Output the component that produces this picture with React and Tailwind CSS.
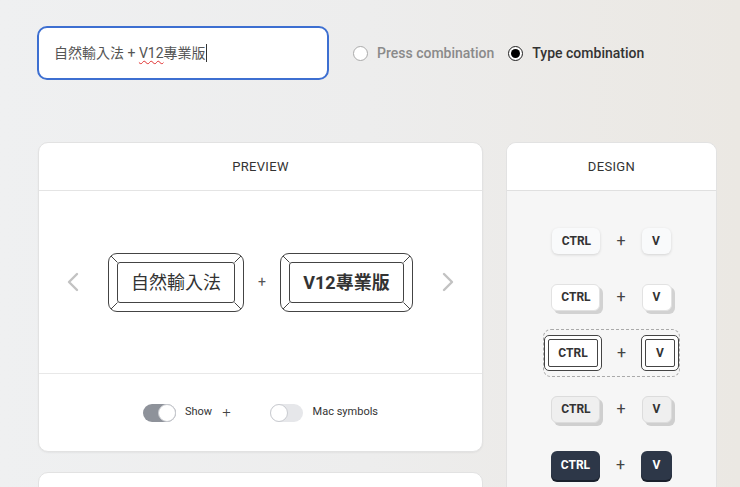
import { ChevronLeft, ChevronRight } from 'lucide-react';

const font = { fontFamily: 'Roboto, "Noto Sans CJK TC", sans-serif' };

const Corner = ({ pos }) => {
  const map = {
    tl: 'top-0 left-0',
    tr: 'top-0 right-0 -scale-x-100',
    bl: 'bottom-0 left-0 -scale-y-100',
    br: 'bottom-0 right-0 -scale-100',
  };
  return (
    <svg className={`absolute w-[9px] h-[9px] ${map[pos]}`} viewBox="0 0 9 9">
      <line x1="2" y1="2" x2="8.5" y2="8.5" stroke="#444" strokeWidth="1" />
    </svg>
  );
};

const BigKey = ({ label, bold, width }) => (
  <div className={`relative ${width} h-[59px] border border-[#444] rounded-[9px] p-[8px] bg-white`}>
    <Corner pos="tl" />
    <Corner pos="tr" />
    <Corner pos="bl" />
    <Corner pos="br" />
    <div className="h-full border border-[#444] rounded-[3px] flex items-center justify-center">
      <span className={`text-[18px] text-[#333] ${bold ? 'font-bold' : 'font-normal'}`}>{label}</span>
    </div>
  </div>
);

const Toggle = ({ on }) => (
  <div
    className={`w-[33px] h-[18px] rounded-full flex items-center ${
      on ? 'bg-[#8e929a] justify-end' : 'bg-[#e6e7ea] justify-start'
    }`}
  >
    <div className="w-[18px] h-[18px] rounded-full bg-white border border-[#c9cbd0]" />
  </div>
);

const Row = ({ children }) => (
  <div className="h-[56px] flex items-center justify-center gap-[16px]">{children}</div>
);

const Plus = () => <span className="text-[16px] text-[#444]">+</span>;

const DesignKey = ({ label, w, kind }) => {
  const styles = {
    flat: 'bg-[#f9fafb] text-[#333] shadow-[0_1px_3px_rgba(0,0,0,0.14)] rounded-md h-[26px]',
    raised: 'bg-white text-[#333] border border-[#e2e2e2] shadow-[3px_3px_0_#d2d2d2] rounded-md h-[27px]',
    gray: 'bg-[#efefef] text-[#333] border border-[#dcdcdc] shadow-[3px_3px_0_#cfcfcf] rounded-md h-[27px]',
    dark: 'bg-[#2d3748] text-white shadow-[0_2px_0_#1a202c] rounded-md h-[29px]',
  };
  return (
    <div className={`${w} flex items-center justify-center text-[12px] font-bold ${styles[kind]}`}>{label}</div>
  );
};

const OutlineKey = ({ label, w }) => (
  <div className={`${w} h-[36px] border border-[#444] rounded-[5px] p-[3px] bg-white`}>
    <div className="h-full border border-[#444] rounded-[2px] flex items-center justify-center text-[12px] font-bold text-[#333]">
      {label}
    </div>
  </div>
);

export default function App() {
  return (
    <div
      className="w-[740px] h-[487px] overflow-hidden bg-gradient-to-r from-[#eff0f1] via-[#ededed] to-[#ebe8e3] pl-[37px] pt-[26px]"
      style={font}
    >
      <div className="flex items-center">
        <div className="w-[292px] h-[54px] rounded-[10px] border-2 border-[#3d6fd1] bg-white flex items-center pl-[15px] text-[14px] text-[#555]">
          <span className="whitespace-pre">
            自然輸入法 +{' '}
            <span className="underline decoration-wavy decoration-[#e03030] decoration-1 underline-offset-2">V12</span>
            專業版
          </span>
          <span className="w-px h-[18px] bg-[#333]" />
        </div>
        <div className="flex items-center ml-[24px] text-[14px] font-medium">
          <span className="w-[15px] h-[15px] rounded-full border border-[#aaa] bg-white" />
          <span className="ml-[9px] text-[#8a8a8a]">Press combination</span>
          <span className="ml-[14px] w-[15px] h-[15px] rounded-full border border-[#222] flex items-center justify-center bg-white">
            <span className="w-[9px] h-[9px] rounded-full bg-black" />
          </span>
          <span className="ml-[9px] text-[#333]">Type combination</span>
        </div>
      </div>

      <div className="flex gap-[23px] mt-[62px] pl-px">
        <div className="w-[445px] flex flex-col gap-[20px]">
          <div className="h-[310px] bg-white rounded-[10px] border border-[#e2e2e2] shadow-[0_1px_2px_rgba(0,0,0,0.05)] flex flex-col">
            <div className="h-[48px] border-b border-[#e4e4e4] flex items-center justify-center text-[13px] text-[#333] tracking-wide">
              PREVIEW
            </div>
            <div className="h-[183px] border-b border-[#e8e8e8] flex items-center justify-center">
              <ChevronLeft className="w-[32px] h-[32px] text-[#c2c2c2] mr-[19px]" strokeWidth={1.8} />
              <BigKey label="自然輸入法" width="w-[136px]" />
              <span className="mx-[14px] text-[14px] text-[#555]">+</span>
              <BigKey label="V12專業版" bold width="w-[133px]" />
              <ChevronRight className="w-[32px] h-[32px] text-[#c2c2c2] ml-[19px]" strokeWidth={1.8} />
            </div>
            <div className="flex-1 flex items-center justify-center">
              <Toggle on />
              <span className="ml-[9px] text-[11px] text-[#333]">Show</span>
              <span className="ml-[10px] text-[15px] text-[#444] font-light">+</span>
              <div className="ml-[39px]">
                <Toggle />
              </div>
              <span className="ml-[10px] text-[11px] text-[#333]">Mac symbols</span>
            </div>
          </div>
          <div className="h-[40px] bg-white rounded-[10px] border border-[#e2e2e2]" />
        </div>

        <div className="w-[211px] h-[360px] bg-[#f6f6f6] rounded-[10px] border border-[#e2e2e2] overflow-hidden">
          <div className="h-[48px] bg-white border-b border-[#e0e0e0] flex items-center justify-center text-[13px] text-[#333] tracking-wide">
            DESIGN
          </div>
          <div className="pt-[22px]">
            <Row>
              <DesignKey label="CTRL" w="w-[48px]" kind="flat" />
              <Plus />
              <DesignKey label="V" w="w-[29px]" kind="flat" />
            </Row>
            <Row>
              <DesignKey label="CTRL" w="w-[49px]" kind="raised" />
              <Plus />
              <DesignKey label="V" w="w-[30px]" kind="raised" />
            </Row>
            <Row>
              <div className="w-[137px] h-[48px] border border-dashed border-[#aaa] rounded-[8px] flex items-center justify-center gap-[15px]">
                <OutlineKey label="CTRL" w="w-[58px]" />
                <Plus />
                <OutlineKey label="V" w="w-[38px]" />
              </div>
            </Row>
            <Row>
              <DesignKey label="CTRL" w="w-[49px]" kind="gray" />
              <Plus />
              <DesignKey label="V" w="w-[30px]" kind="gray" />
            </Row>
            <Row>
              <DesignKey label="CTRL" w="w-[49px]" kind="dark" />
              <Plus />
              <DesignKey label="V" w="w-[31px]" kind="dark" />
            </Row>
          </div>
        </div>
      </div>
    </div>
  );
}
